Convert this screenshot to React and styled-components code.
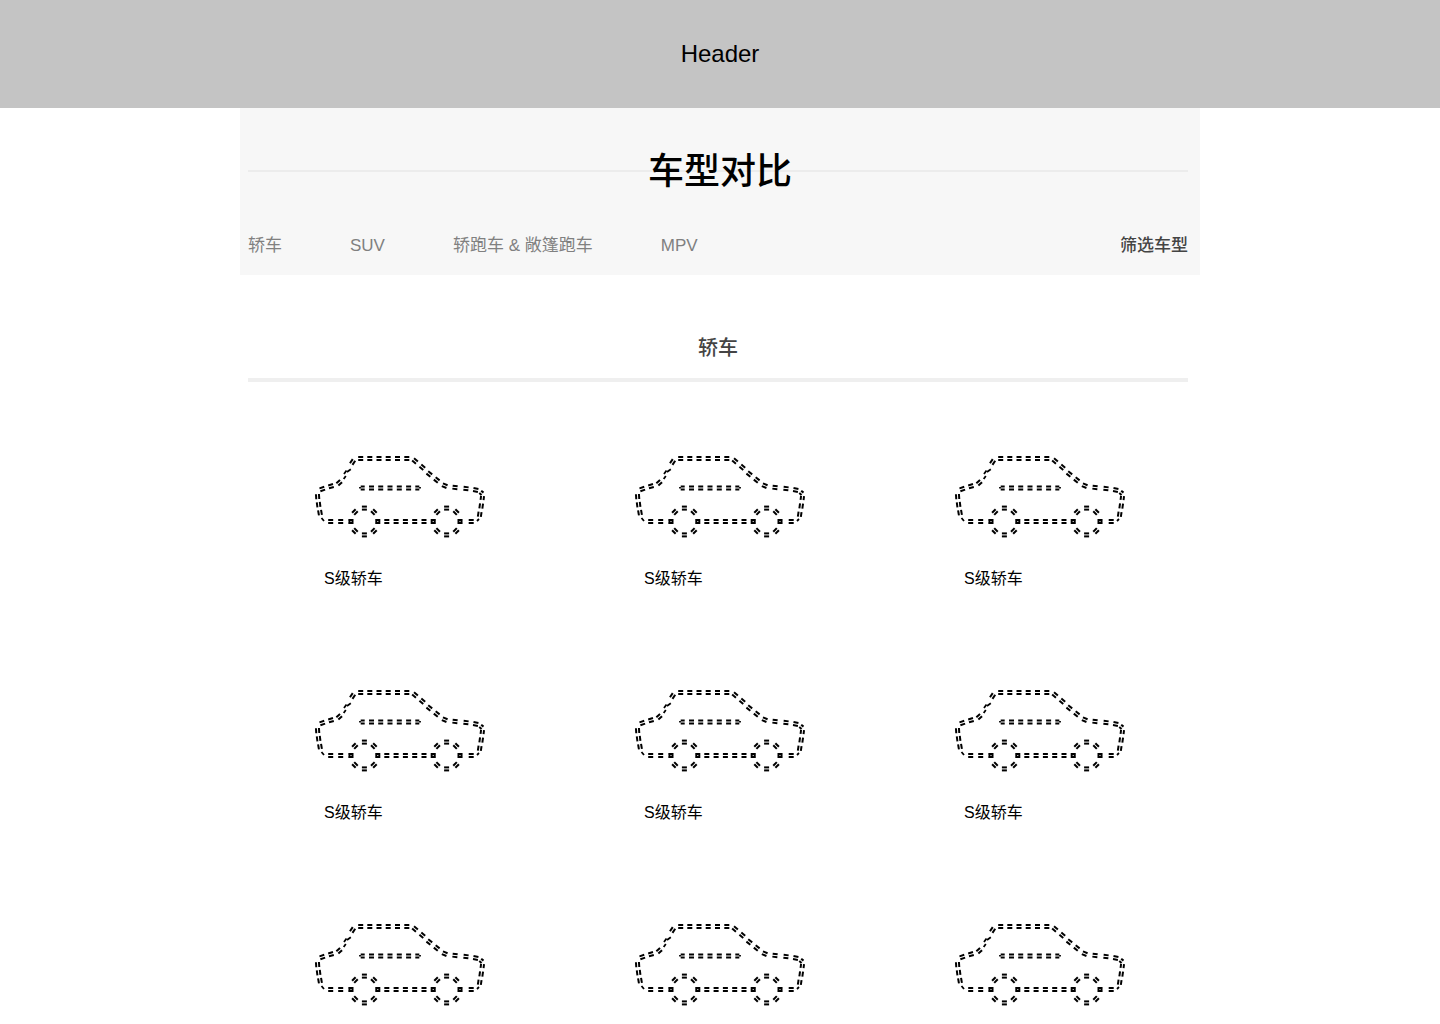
import React from 'react'
import styled, { createGlobalStyle } from 'styled-components'

const GlobalStyle = createGlobalStyle`
* {
    box-sizing: border-box;
}
body {
    margin: 0;
    background-color: white;
    color: black;
    font-family: "Liberation Sans", "Noto Sans CJK SC", sans-serif;
}
`
const Header = styled.header`
display: flex;
align-items: center;
justify-content: center;
height: 108px;
background-color: #c4c4c4;
font-size: 24px;
`
const Main = styled.main`
max-width: 960px;
margin: 0 auto;
`
const Compare = styled.section`
padding: 36px 12px 16px 8px;
background-color: #f7f7f7;
`
const TitleRow = styled.div`
display: flex;
justify-content: center;
background: linear-gradient(#ececec, #ececec) center / 100% 2px no-repeat;
`
const Title = styled.h1`
margin: 0 0 0 4px;
padding-top: 2px;
font-size: 36px;
font-weight: 500;
line-height: 52px;
`
const Nav = styled.nav`
display: flex;
align-items: center;
gap: 68px;
margin-top: 35px;
line-height: 26px;
font-size: 17px;
`
const NavLink = styled.a`
color: #808080;
text-decoration: none;
&:hover{
    color: black;
}
`
const FilterButton = styled.button`
margin-left: auto;
padding: 0;
border: none;
background: none;
color: #444;
font: inherit;
font-weight: 500;
cursor: pointer;
`
const Group = styled.section`
padding-top: 58px;
`
const GroupTitle = styled.h2`
margin: 0 12px 0 8px;
padding-bottom: 15px;
border-bottom: 4px solid #efefef;
color: #444;
font-size: 20px;
font-weight: 500;
line-height: 30px;
text-align: center;
`
const Grid = styled.div`
display: grid;
grid-template-columns: repeat(3, 1fr);
row-gap: 93px;
padding-top: 68px;
`
const Card = styled.a`
display: flex;
flex-direction: column;
gap: 27px;
width: 180px;
margin: 0 auto;
color: black;
text-decoration: none;
`
const CardName = styled.span`
padding: 0 14px;
font-size: 16px;
line-height: 24px;
`
const CarSvg = styled.svg`
display: block;
width: 100%;
`

// every dash of the outline: x, y, angle, length
const dashes = [
    // roof
    [50.7, 8.5, 0], [59.8, 8.5, 0], [69, 8.5, 0], [78.2, 8.5, 0], [87.5, 8.5, 0], [96.8, 8.5, 0],
    // rear window and boot
    [105, 11, 40], [112.3, 17.3, 40], [119.3, 24, 38], [126.7, 30, 38],
    [134.7, 35.7, 22], [145, 37.4, 6], [156, 38.6, 6], [165.7, 40, 10],
    [171.4, 42.8, 40, 3], [172.3, 48, 97, 4], [171.2, 56, 98], [169.7, 64.3, 98],
    // bonnet and nose
    [42.6, 12, -56], [29.2, 32.8, -42], [21, 36.2, -16], [12.3, 39, -18],
    [7.6, 46.6, 86], [8.6, 54.6, 83], [10, 62.6, 80],
    // sill
    [20.7, 71.5, 0], [30.7, 71.5, 0], [40.7, 71.5, 0, 4], [67.9, 71.5, 0, 4],
    [76.8, 71.5, 0], [86.1, 71.5, 0], [95.4, 71.5, 0], [104.7, 71.5, 0], [114, 71.5, 0],
    [123.2, 71.5, 0, 4], [150.1, 71.5, 0, 4], [161.2, 71.5, 0],
    // trim
    [52.7, 38, 0, 4], [61.5, 38, 0], [70.7, 38, 0], [80, 38, 0],
    [89.3, 38, 0], [98.6, 38, 0], [107.3, 38, 0, 4],
]

const Dash = ({ x, y, angle, length = 5 }) => (
    <g transform={`translate(${x} ${y}) rotate(${angle})`}>
        <rect x={-length / 2} y="-2.5" width={length} height="2" />
        <rect x={-length / 2} y="0.5" width={length} height="2" />
    </g>
)

const Wheel = ({ cx }) => (
    <g transform={`translate(${cx} 71.5)`}>
        {[0, 45, 90, 135, 180, 225, 270, 315].map((turn) => (
            <g key={turn} transform={`rotate(${turn})`}>
                <Dash x={0} y={-13.4} angle={0} />
            </g>
        ))}
    </g>
)

const Car = () => (
    <CarSvg viewBox="0 0 180 90" aria-hidden="true">
        {dashes.map(([x, y, angle, length]) => (
            <Dash key={`${x}-${y}`} x={x} y={y} angle={angle} length={length} />
        ))}
        <Wheel cx={54.4} />
        <Wheel cx={136.6} />
        <path
            d="M34 24 L36.5 20.5 M37 22 L40.8 19.2 M33.7 29 L35.8 26 M11.5 68 L14 71 M167 71 L169 69 M50 37 V38.6 M110 37 V38.6"
            fill="none"
            stroke="#000"
            strokeWidth="1.8"
        />
    </CarSvg>
)

const categories = ['轿车', 'SUV', '轿跑车 & 敞篷跑车', 'MPV']
const cars = [
    { id: 1, name: 'S级轿车' },
    { id: 2, name: 'S级轿车' },
    { id: 3, name: 'S级轿车' },
    { id: 4, name: 'S级轿车' },
    { id: 5, name: 'S级轿车' },
    { id: 6, name: 'S级轿车' },
    { id: 7 },
    { id: 8 },
    { id: 9 },
]

const App = () => {
    return (
        <>
            <GlobalStyle />
            <Header>Header</Header>
            <Main>
                <Compare>
                    <TitleRow>
                        <Title>车型对比</Title>
                    </TitleRow>
                    <Nav>
                        {categories.map((name) => (
                            <NavLink key={name} href="#">{name}</NavLink>
                        ))}
                        <FilterButton type="button">筛选车型</FilterButton>
                    </Nav>
                </Compare>
                <Group>
                    <GroupTitle>轿车</GroupTitle>
                    <Grid>
                        {cars.map((car) => (
                            <Card key={car.id} href="#">
                                <Car />
                                {car.name && <CardName>{car.name}</CardName>}
                            </Card>
                        ))}
                    </Grid>
                </Group>
            </Main>
        </>
    )
}

export default App
